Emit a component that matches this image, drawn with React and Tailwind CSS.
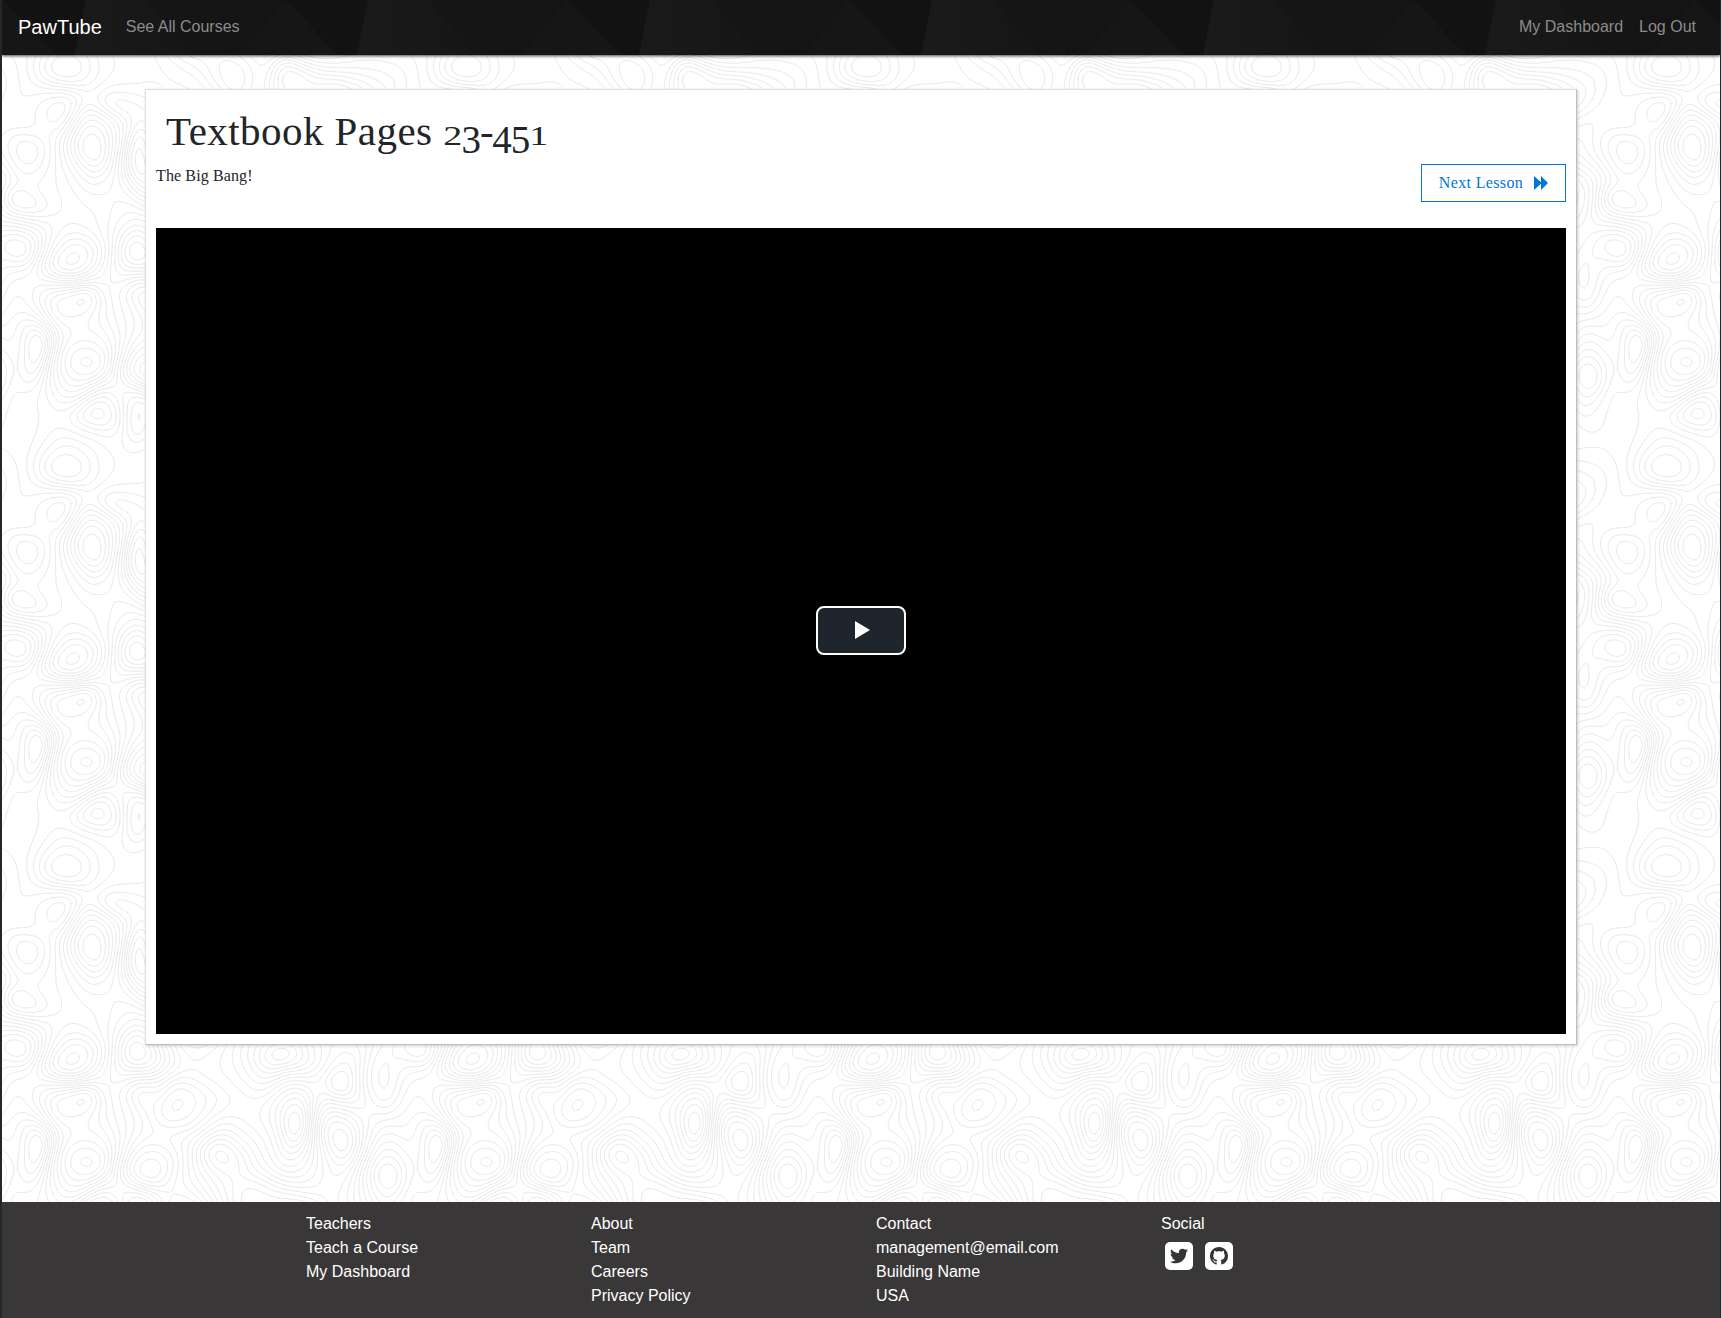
import React from "react";
import { FaTwitter } from "react-icons/fa";

const TILE = 400;
const STEP = 2.5;

// [x, y, radiusX, radiusY, height] of the hills and hollows in one repeating tile
const HILLS = [
  [59, 65, 26, 26, -5], [228, 74, 24, 34, 6], [284, 78, 18, 26, 5], [338, 96, 50, 32, 9],
  [57, 107, 24, 20, 5], [113, 103, 22, 18, 4], [23, 153, 30, 24, 6], [90, 150, 20, 34, -7],
  [141, 158, 16, 40, 8], [15, 204, 24, 20, 6], [16, 246, 24, 26, -7], [71, 260, 26, 20, 6],
  [52, 306, 20, 20, -5], [85, 301, 20, 20, -6], [33, 347, 18, 34, 8], [86, 366, 36, 36, -9],
  [99, 10, 26, 20, 6], [136, 12, 20, 26, -6], [138, 248, 26, 36, -8], [138, 288, 14, 16, 4],
  [176, 304, 34, 28, 7], [219, 352, 26, 26, -7], [143, 367, 28, 24, 7], [282, 256, 34, 26, -8],
  [339, 285, 20, 24, 5], [380, 282, 20, 34, -6], [292, 325, 20, 38, 8], [335, 332, 22, 38, -8],
  [384, 377, 20, 34, 7], [250, 395, 34, 26, -6], [220, 160, 44, 36, -8], [300, 180, 34, 42, 8],
  [360, 200, 34, 34, -7], [190, 220, 34, 30, 7], [190, 30, 26, 34, 7], [300, 20, 36, 26, -7],
];

function wrap(d) {
  return d - TILE * Math.round(d / TILE);
}

function heightAt(x, y) {
  const k = (2 * Math.PI) / TILE;
  const wx = x + 2 * Math.sin(k * 3 * y + 1) + 2 * Math.sin(k * (5 * x + 4 * y));
  const wy = y + 2 * Math.sin(k * 4 * x + 2) + 2 * Math.cos(k * (6 * y - 3 * x));
  let h = 0.6 * Math.sin(k * (x + 2 * y)) + 0.5 * Math.cos(k * (3 * x - y));
  for (const [cx, cy, rx, ry, a] of HILLS) {
    const dx = wrap(wx - cx) / rx;
    const dy = wrap(wy - cy) / ry;
    const q = dx * dx + dy * dy;
    if (q < 12) h += 0.9 * a * Math.exp(-q * 0.85);
  }
  return h;
}

function contourPath() {
  const n = TILE / STEP;
  const grid = [];
  for (let j = 0; j <= n; j++) {
    const row = [];
    for (let i = 0; i <= n; i++) row.push(heightAt((i % n) * STEP, (j % n) * STEP));
    grid.push(row);
  }
  const out = [];
  for (let j = 0; j < n; j++) {
    for (let i = 0; i < n; i++) {
      const a = grid[j][i], b = grid[j][i + 1], c = grid[j + 1][i + 1], d = grid[j + 1][i];
      const lo = Math.ceil(Math.min(a, b, c, d) - 0.37);
      const hi = Math.floor(Math.max(a, b, c, d) - 0.37);
      for (let l = lo; l <= hi; l++) {
        const v = l + 0.37;
        const pts = [];
        const cut = (p, q, x0, y0, x1, y1) => {
          if (p < v !== q < v) {
            const t = (v - p) / (q - p);
            pts.push(((i + x0 + (x1 - x0) * t) * STEP).toFixed(1) + " " + ((j + y0 + (y1 - y0) * t) * STEP).toFixed(1));
          }
        };
        cut(a, b, 0, 0, 1, 0);
        cut(b, c, 1, 0, 1, 1);
        cut(c, d, 1, 1, 0, 1);
        cut(d, a, 0, 1, 0, 0);
        for (let m = 0; m + 1 < pts.length; m += 2) out.push("M" + pts[m] + "L" + pts[m + 1]);
      }
    }
  }
  return out.join("");
}

const CONTOURS = contourPath();

function Topography() {
  return (
    <svg className="absolute inset-0 h-full w-full" aria-hidden="true">
      <defs>
        <pattern id="topo" width="400" height="400" patternUnits="userSpaceOnUse">
          <path d={CONTOURS} fill="none" stroke="#ebebeb" strokeWidth="1" strokeLinecap="round" />
        </pattern>
      </defs>
      <rect width="100%" height="100%" fill="url(#topo)" />
    </svg>
  );
}

function Facets() {
  return (
    <svg className="absolute inset-0 h-full w-full" aria-hidden="true">
      <defs>
        <linearGradient id="facetLight">
          <stop offset="0" stopColor="#1a1a1a" />
          <stop offset="1" stopColor="#161616" />
        </linearGradient>
        <pattern id="facets" x="-49" width="282" height="55" patternUnits="userSpaceOnUse">
          <rect width="282" height="55" fill="#141414" />
          <path d="M50 0L5 55H103Z" fill="#161616" />
          <path d="M50 0L103 55H122L133 0Z" fill="#121212" />
          <path d="M133 0H194L240 55H122Z" fill="url(#facetLight)" />
          <path d="M194 0H266V55H240Z" fill="#151515" />
        </pattern>
      </defs>
      <rect width="100%" height="100%" fill="url(#facets)" />
    </svg>
  );
}

// Old-style figures: 1 and 2 stand at x-height, 3 to 5 hang below the baseline
function ShortFigure({ children }) {
  return <span className="inline-block origin-[50%_83.75%] scale-y-[0.72] text-[38px] leading-none tracking-[-0.8px]">{children}</span>;
}

function HangingFigure({ children }) {
  return <span className="align-[-8px] text-[39px] leading-none tracking-[-0.9px]">{children}</span>;
}

function FooterColumn({ title, items, children }) {
  return (
    <div className="w-[285px] leading-6">
      <div>{title}</div>
      {items && items.map((item) => <a key={item} href="#" className="block">{item}</a>)}
      {children}
    </div>
  );
}

export default function App() {
  return (
    <div className="h-[1318px] w-full overflow-hidden border-r border-l-2 border-[#22282a] bg-white font-['Liberation_Sans',Arial,sans-serif] text-base text-[#212529]">
      <div className="relative isolate flex h-full flex-col">
        <div className="absolute inset-0 -z-10"><Topography /></div>
        <nav className="relative isolate flex h-[55px] shrink-0 items-center bg-[#151515] pr-6 pl-4 shadow-[0_1px_3px_rgba(0,0,0,0.75)]">
          <div className="absolute inset-0 -z-10"><Facets /></div>
          <a href="#" className="mr-6 pb-0.5 text-xl leading-[30px] text-white">PawTube</a>
          <a href="#" className="pb-0.5 text-[#8c8c8c]">See All Courses</a>
          <div className="ml-auto flex gap-4 pb-0.5 text-[#8c8c8c]">
            <a href="#">My Dashboard</a>
            <a href="#">Log Out</a>
          </div>
        </nav>

        <main className="mx-auto mt-[34px] h-[956px] w-[1432px] shrink-0 border border-[#dedede] border-r-[#bdbdbd] border-b-[#bdbdbd] bg-white px-[10px] font-['Liberation_Serif',serif] shadow-[1px_1px_3px_rgba(0,0,0,0.2)]">
          <h1 className="h-[74px] pt-[17px] pl-[10px] text-[41px] leading-[48px] tracking-[0.45px] whitespace-nowrap">
            Textbook Pages <ShortFigure>2</ShortFigure><HangingFigure>3</HangingFigure><span className="tracking-[-1.5px]">-</span><HangingFigure>45</HangingFigure><ShortFigure>1</ShortFigure>
          </h1>
          <div className="flex justify-between">
            <p className="text-base leading-6 tracking-[0.12px]">The Big Bang!</p>
            <button className="flex h-[38px] w-[145px] items-center justify-center gap-[11px] border border-[#0275d8] text-base text-[#0275d8]">
              <span className="tracking-[0.35px]">Next Lesson</span>
              <svg width="14" height="14" viewBox="0 0 14 14" fill="currentColor"><path d="M0 0L7 6.2V0L14 7L7 14V7.8L0 14Z" /></svg>
            </button>
          </div>
          <div className="mt-[26px] flex h-[806px] items-center justify-center bg-black pb-0.5">
            <button aria-label="Play Video" className="flex h-[49px] w-[90px] items-center justify-center rounded-[8px] border-2 border-white bg-[#1e252d] pl-0.5">
              <svg width="15" height="18" viewBox="0 0 15 18" fill="#fff"><path d="M0 0L15 9L0 18Z" /></svg>
            </button>
          </div>
        </main>

        <footer className="mt-auto flex h-[116px] shrink-0 bg-[#353333]/98 pt-[10px] pl-[304px] text-white">
          <FooterColumn title="Teachers" items={["Teach a Course", "My Dashboard"]} />
          <FooterColumn title="About" items={["Team", "Careers", "Privacy Policy"]} />
          <FooterColumn title="Contact" items={["management@email.com", "Building Name", "USA"]} />
          <FooterColumn title="Social">
            <div className="flex gap-3 pt-[6px] pl-1 text-[#353333]">
              <a href="#" aria-label="Twitter" className="flex size-7 items-center justify-center rounded-[5px] bg-white">
                <FaTwitter size={18} />
              </a>
              <a href="#" aria-label="GitHub" className="flex size-7 items-center justify-center rounded-[5px] bg-white">
                <svg width="18" height="18" viewBox="0 0 16 16" fill="currentColor">
                  <path d="M8 0C3.58 0 0 3.58 0 8c0 3.54 2.29 6.53 5.47 7.59.4.07.55-.17.55-.38 0-.19-.01-.82-.01-1.49-2.01.37-2.53-.49-2.69-.94-.09-.23-.48-.94-.82-1.13-.28-.15-.68-.52-.01-.53.63-.01 1.08.58 1.23.82.72 1.21 1.87.87 2.33.66.07-.52.28-.87.51-1.07-1.78-.2-3.64-.89-3.64-3.95 0-.87.31-1.59.82-2.15-.08-.2-.36-1.02.08-2.12 0 0 .67-.21 2.2.82.64-.18 1.32-.27 2-.27s1.36.09 2 .27c1.53-1.04 2.2-.82 2.2-.82.44 1.1.16 1.92.08 2.12.51.56.82 1.27.82 2.15 0 3.07-1.87 3.75-3.65 3.95.29.25.54.73.54 1.48 0 1.07-.01 1.93-.01 2.2 0 .21.15.46.55.38A8.01 8.01 0 0 0 16 8c0-4.42-3.58-8-8-8z" />
                </svg>
              </a>
            </div>
          </FooterColumn>
        </footer>
      </div>
    </div>
  );
}
